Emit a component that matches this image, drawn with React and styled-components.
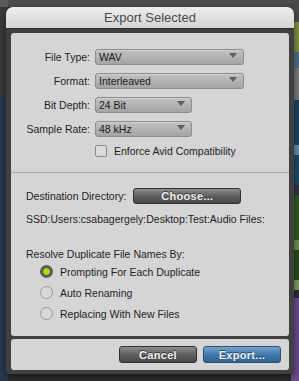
import { Fragment } from 'react';
import styled, { createGlobalStyle } from 'styled-components';

const Global = createGlobalStyle`
  html, body {
    margin: 0;
    padding: 0;
    width: 299px;
    height: 381px;
    overflow: hidden;
    font-family: "Liberation Sans", Arial, sans-serif;
  }
  body {
    background:
      linear-gradient(to bottom, #5a5a5a 0 7px, #3a3a3a 7px 95px, #27384d 95px 100%) left / 8px 100% no-repeat,
      linear-gradient(to bottom, #4a4a4a 0 22px, #7b8f3c 22px 52px, #4d6a8c 52px 68px, #777 68px 100px,
        #1f4460 100px 145px, #5f8aa8 145px 155px, #1e4a66 155px 185px, #334 185px 195px, #2e5a22 195px 240px,
        #6c8d4a 240px 250px, #284a1c 250px 280px, #7a9a5a 280px 290px, #2b2b3c 290px 298px, #6a4a8c 298px 381px)
        right / 8px 100% no-repeat,
      linear-gradient(to bottom, #4c4c4c 0 7px, #2a2a2a 7px 100%);
  }
`;

const Dialog = styled.div`
  box-sizing: border-box;
  margin: 7px 5px 0 6px;
  width: 288px;
  height: 367px;
  background: #404040;
  border-radius: 7px 7px 4px 4px;
  display: flex;
  flex-direction: column;
  padding: 0 5px 4px;
  box-shadow: 0 2px 6px rgba(0, 0, 0, 0.5);
`;

const TitleBar = styled.div`
  margin: 0 -5px;
  height: 21px;
  border-radius: 7px 7px 0 0;
  background: linear-gradient(to bottom, #eeeeee, #d4d4d4);
  border-bottom: 1px solid #2c2c2c;
  display: flex;
  align-items: center;
  justify-content: center;
  font-size: 13px;
  color: #4a4a4a;
  flex-shrink: 0;
`;

const Panel = styled.div`
  margin-top: 4px;
  background: #d5d5d5;
  border-radius: 3px;
  flex: 1;
  display: flex;
  flex-direction: column;
`;

const Footer = styled.div`
  margin-top: 3px;
  height: 31px;
  background: #d5d5d5;
  border-radius: 3px;
  display: flex;
  align-items: center;
  justify-content: flex-end;
  gap: 6px;
  padding-right: 8px;
  box-sizing: border-box;
`;

const FormatSection = styled.div`
  display: grid;
  grid-template-columns: 79px auto;
  column-gap: 5px;
  row-gap: 8px;
  padding-top: 16px;
  padding-bottom: 15px;
  border-bottom: 1px solid #a9a9a9;
  align-items: center;
`;

const Label = styled.div`
  font-size: 10.5px;
  color: #1e1e1e;
  text-align: right;
  white-space: nowrap;
`;

const Select = styled.div`
  box-sizing: border-box;
  width: ${({ $w }) => $w}px;
  height: 16px;
  border: 1px solid #8c8c8c;
  border-radius: 3px;
  background: linear-gradient(to bottom, #c2c2c2, #a4a4a4);
  display: flex;
  align-items: center;
  justify-content: space-between;
  padding: 0 6px 0 3px;
  font-size: 10.5px;
  color: #1a1a1a;
  box-shadow: inset 0 1px 0 rgba(255, 255, 255, 0.25);
`;

const Arrow = styled.span`
  width: 0;
  height: 0;
  border-left: 4px solid transparent;
  border-right: 4px solid transparent;
  border-top: 5px solid #5e5e5e;
  margin-top: -4px;
`;

const CheckRow = styled.div`
  grid-column: 2;
  display: flex;
  align-items: center;
  gap: 7px;
  font-size: 10.5px;
  color: #1e1e1e;
`;

const Checkbox = styled.span`
  box-sizing: border-box;
  width: 12px;
  height: 12px;
  border: 1px solid #8a8a8a;
  border-radius: 2px;
  background: #dcdcdc;
`;

const DestSection = styled.div`
  padding: 15px 15px 0;
  display: flex;
  flex-direction: column;
`;

const DestRow = styled.div`
  display: flex;
  align-items: center;
  gap: 7px;
  font-size: 10.5px;
  color: #1e1e1e;
`;

const DarkButton = styled.div`
  box-sizing: border-box;
  width: ${({ $w }) => $w || 78}px;
  height: ${({ $h }) => $h || 17}px;
  border: 1px solid #333;
  border-radius: 3px;
  background: ${({ $blue }) =>
    $blue
      ? 'linear-gradient(to bottom, #74a5cf, #3c76a6 55%, #2d6594)'
      : 'linear-gradient(to bottom, #8d8d8d, #5b5b5b 55%, #4a4a4a)'};
  border-color: ${({ $blue }) => ($blue ? '#2b4f70' : '#303030')};
  display: flex;
  align-items: center;
  justify-content: center;
  font-size: 11px;
  font-weight: bold;
  color: #f0f0f0;
  text-shadow: 0 -1px 0 rgba(0, 0, 0, 0.5);
  letter-spacing: 0.3px;
`;

const PathText = styled.div`
  margin-top: 9px;
  font-size: 10.5px;
  color: #1e1e1e;
  white-space: nowrap;
`;

const Heading = styled.div`
  margin-top: 23px;
  font-size: 10.5px;
  color: #1e1e1e;
`;

const RadioList = styled.div`
  margin-top: 5px;
  padding-left: 14px;
  display: flex;
  flex-direction: column;
  gap: 8px;
`;

const RadioRow = styled.div`
  display: flex;
  align-items: center;
  gap: 7px;
  font-size: 10.5px;
  color: #1e1e1e;
`;

const Radio = styled.span`
  box-sizing: border-box;
  width: 13px;
  height: 13px;
  border-radius: 50%;
  border: ${({ $on }) => ($on ? '3px solid #5c5c5c' : '1px solid #9a9a9a')};
  background: ${({ $on }) => ($on ? '#a8e010' : '#d8d8d8')};
  box-shadow: ${({ $on }) => ($on ? 'inset 0 0 1px #5a8a00' : 'none')};
`;

const formats = [
  { label: 'File Type:', value: 'WAV', w: 149 },
  { label: 'Format:', value: 'Interleaved', w: 149 },
  { label: 'Bit Depth:', value: '24 Bit', w: 97 },
  { label: 'Sample Rate:', value: '48 kHz', w: 97 },
];

const options = [
  { label: 'Prompting For Each Duplicate', on: true },
  { label: 'Auto Renaming', on: false },
  { label: 'Replacing With New Files', on: false },
];

export default function App() {
  return (
    <>
      <Global />
      <Dialog>
        <TitleBar>Export Selected</TitleBar>
        <Panel>
          <FormatSection>
            {formats.map((f) => (
              <Fragment key={f.label}>
                <Label>{f.label}</Label>
                <Select $w={f.w}>
                  {f.value}
                  <Arrow />
                </Select>
              </Fragment>
            ))}
            <CheckRow>
              <Checkbox />
              Enforce Avid Compatibility
            </CheckRow>
          </FormatSection>
          <DestSection>
            <DestRow>
              Destination Directory:
              <DarkButton $w={108} $h={16}>Choose...</DarkButton>
            </DestRow>
            <PathText>SSD:Users:csabagergely:Desktop:Test:Audio Files:</PathText>
            <Heading>Resolve Duplicate File Names By:</Heading>
            <RadioList>
              {options.map((o) => (
                <RadioRow key={o.label}>
                  <Radio $on={o.on} />
                  {o.label}
                </RadioRow>
              ))}
            </RadioList>
          </DestSection>
        </Panel>
        <Footer>
          <DarkButton>Cancel</DarkButton>
          <DarkButton $blue>Export...</DarkButton>
        </Footer>
      </Dialog>
    </>
  );
}
